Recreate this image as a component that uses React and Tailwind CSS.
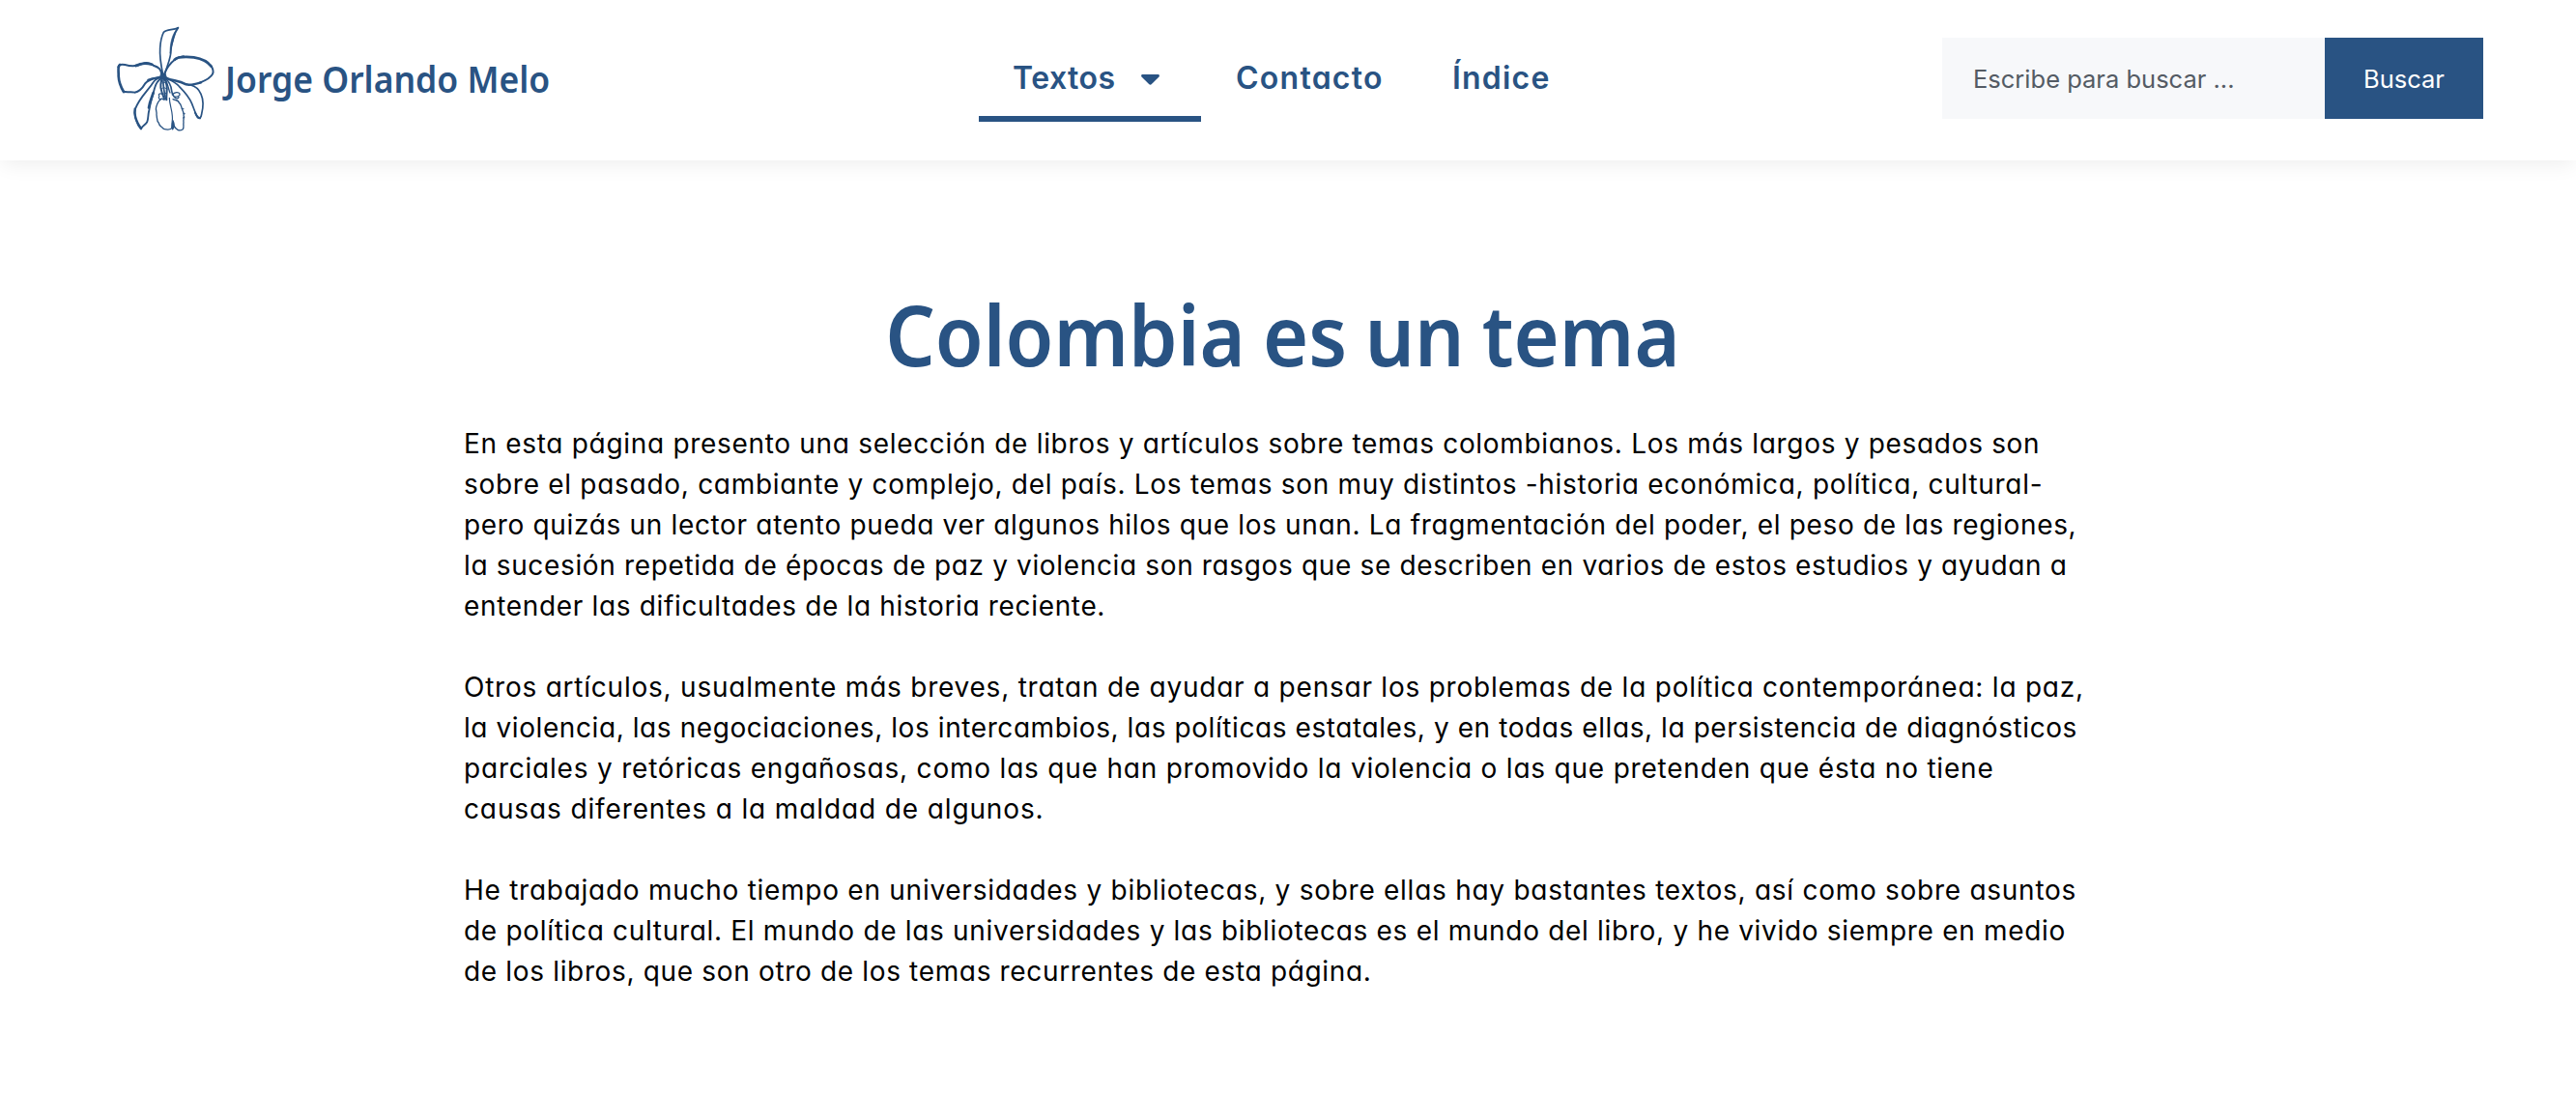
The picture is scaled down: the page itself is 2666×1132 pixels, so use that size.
const paragraphs = [
  [
    ['En esta página presento una selección de libros y artículos sobre temas colombianos. Los más largos y pesados son', 'tracking-[0.688px]'],
    ['sobre el pasado, cambiante y complejo, del país. Los temas son muy distintos -historia económica, política, cultural-', 'tracking-[0.71px]'],
    ['pero quizás un lector atento pueda ver algunos hilos que los unan. La fragmentación del poder, el peso de las regiones,', 'tracking-[0.664px]'],
    ['la sucesión repetida de épocas de paz y violencia son rasgos que se describen en varios de estos estudios y ayudan a', 'tracking-[0.647px]'],
    ['entender las dificultades de la historia reciente.', 'tracking-[0.66px]'],
  ],
  [
    ['Otros artículos, usualmente más breves, tratan de ayudar a pensar los problemas de la política contemporánea: la paz,', 'tracking-[0.77px]'],
    ['la violencia, las negociaciones, los intercambios, las políticas estatales, y en todas ellas, la persistencia de diagnósticos', 'tracking-[0.58px]'],
    ['parciales y retóricas engañosas, como las que han promovido la violencia o las que pretenden que ésta no tiene', 'tracking-[0.793px]'],
    ['causas diferentes a la maldad de algunos.', 'tracking-[0.876px]'],
  ],
  [
    ['He trabajado mucho tiempo en universidades y bibliotecas, y sobre ellas hay bastantes textos, así como sobre asuntos', 'tracking-[0.733px]'],
    ['de política cultural. El mundo de las universidades y las bibliotecas es el mundo del libro, y he vivido siempre en medio', 'tracking-[0.686px]'],
    ['de los libros, que son otro de los temas recurrentes de esta página.', 'tracking-[0.66px]'],
  ],
];

function Orchid() {
  return (
    <svg viewBox="0 0 390 390" className="h-[130px] w-[130px] shrink-0" fill="none" stroke="#295383" strokeLinecap="round" strokeLinejoin="round" aria-hidden="true">
      {/* top petal */}
      <path strokeWidth="5" d="M176 184 C171 160 165 128 167 102 C168 82 172 64 178 52 C188 42 208 46 223 38" />
      <path strokeWidth="5" d="M223 38 C216 48 211 60 209 70 C205 84 201 96 201 108 C201 132 190 152 181 184" />
      <path fill="#295383" strokeWidth="2" d="M222 38 C204 58 198 86 198 118 C202 96 208 80 210 66 C213 54 218 46 222 38 Z" />
      {/* right petal */}
      <path strokeWidth="6" d="M179 184 C188 162 198 148 212 138 C222 130 228 128 240 127" />
      <path strokeWidth="8" d="M212 137 C224 126 250 128 272 130 C296 134 316 144 326 158" />
      <path strokeWidth="6" d="M324 155 C332 166 334 174 330 182 C324 194 308 202 290 209" />
      <path strokeWidth="7.5" d="M294 208 C274 214 260 217 248 214 C238 209 226 205 212 202 C200 200 190 196 182 192" />
      {/* left petal */}
      <path strokeWidth="6" d="M173 186 C170 168 164 160 146 155 C138 149 124 145 112 150 C94 159 76 158 58 153 C48 151 38 152 37 160" />
      <path strokeWidth="8" d="M42 153 C34 160 39 174 38 188 C39 206 46 224 54 237" />
      <path strokeWidth="6" d="M53 236 C66 240 78 235 88 239 C104 236 112 226 120 212 C132 196 150 196 172 190" />
      <path strokeWidth="8" d="M92 156 C106 148 120 146 142 152" />
      <path strokeWidth="6.5" d="M130 200 C142 194 160 194 174 191" />
      {/* lower-left petal */}
      <path strokeWidth="5.5" d="M172 192 C154 194 148 204 140 216 C124 238 102 258 90 290 C85 308 92 326 100 342 L108 352" />
      <path strokeWidth="7" d="M89 290 C85 310 94 330 107 350" />
      <path strokeWidth="5.5" d="M108 352 C114 340 122 340 127 330 C131 318 129 310 133 294 C137 268 144 250 150 226 C154 210 162 200 173 194" />
      <path strokeWidth="8" d="M132 286 C135 266 140 258 146 240" />
      {/* lower-right petal */}
      <path strokeWidth="5" d="M184 194 C204 202 216 208 226 220 C244 238 258 254 266 274 C272 290 278 308 284 317 C290 322 294 318 296 306 C301 286 302 262 294 244 C288 230 280 220 262 216" />
      <path strokeWidth="6" d="M276 302 C280 312 284 318 291 319" />
      {/* column */}
      <path strokeWidth="6" d="M177 186 C170 202 165 220 172 236 C175 246 178 252 180 260" />
      <path strokeWidth="6" d="M178 190 C184 204 190 214 188 232 C188 244 186 252 187 262" />
      <path strokeWidth="5" d="M178 194 C174 212 180 236 184 258" />
      <path strokeWidth="5" d="M181 192 C194 204 202 218 203 234 C204 242 206 246 209 250" />
      <path strokeWidth="4" d="M184 198 C192 214 192 226 198 240" />
      <path strokeWidth="3" d="M174 210 C182 206 186 208 188 216 M171 228 C178 222 184 224 189 230 M176 244 L188 240" />
      <path fill="#295383" strokeWidth="3" d="M170 182 L184 182 L187 194 L178 198 L169 193 Z" />
      {/* lip */}
      <path strokeWidth="3.5" d="M174 244 C164 240 160 246 165 250 C160 256 164 262 172 258 C176 262 182 262 187 256" />
      <path strokeWidth="4" d="M205 246 C212 238 224 236 228 243 C230 250 220 253 210 252 C214 258 222 260 225 254" />
      <path strokeWidth="4" d="M170 260 C162 264 158 274 155 284 C152 294 158 300 156 308 C158 318 156 328 163 334 C164 344 174 346 178 352 C188 355 200 356 205 348" />
      <path strokeWidth="3.5" d="M196 256 C196 276 204 292 205 312 C207 328 200 340 207 348" />
      <path fill="#295383" strokeWidth="3.5" d="M207 326 C206 338 199 344 206 354 C211 348 213 338 207 326 Z" />
      <path strokeWidth="4" d="M207 260 C216 264 224 262 226 271 C234 276 231 284 236 290 C236 298 243 302 240 310 C243 318 238 324 240 332 C238 342 243 348 237 354 C226 360 216 354 211 344" />
      <path strokeWidth="3" d="M234 290 L240 290 M238 303 L244 305 M238 318 L243 316" />
    </svg>
  );
}

export default function App() {
  return (
    <div className="min-h-[1132px] overflow-hidden bg-white font-['Inter',sans-serif]">
      <header className="flex h-[166px] items-start bg-white shadow-[0_6px_20px_-2px_rgba(0,0,0,0.07)]">
        <a className="flex w-[903px] shrink-0 pt-4 pl-[110px] text-[#295383]">
          <Orchid />
          <span className="mt-[39px] -ml-[7px] inline-block origin-left scale-x-[0.935] text-[38px] leading-[52px] font-semibold whitespace-nowrap font-['Noto_Sans',sans-serif]">Jorge Orlando Melo</span>
        </a>

        <nav className="ml-[110px] flex shrink-0 pt-9 text-[32px] leading-[90px] font-semibold text-[#295383] [font-feature-settings:'cv11']">
          <a className="flex h-[90px] w-[230px] items-start border-b-6 border-[#295383] pl-[35px]">
            <span className="w-[133px] tracking-[0.5px]">Textos</span>
            <svg viewBox="0 0 19 11" className="mt-[41px] h-[11px] w-[19px]" fill="#295383" aria-hidden="true">
              <path d="M1.5 0h16c1.3 0 1.9 1.4 1 2.4l-7.6 7.7c-.8.8-2 .8-2.8 0L.5 2.4C-.4 1.4.2 0 1.5 0z" />
            </svg>
          </a>
          <a className="w-[224px] pl-[36px] tracking-[1.25px]">Contacto</a>
          <a className="w-[170px] pl-[36px] tracking-[1.2px]">Índice</a>
        </nav>

        <form className="mt-[39px] mr-[96px] ml-auto flex h-[84px] shrink-0 text-[25.5px] leading-[86px]">
          <label className="w-[396px] bg-[#f7f8fa] pl-[32px] text-[#545b64]">Escribe para buscar ...</label>
          <button type="button" className="w-[164px] bg-[#295383] text-white">Buscar</button>
        </form>
      </header>

      <main className="flex flex-col items-center">
        <h1 className="mt-[121px] -ml-[12px] scale-x-[0.94] text-[86px] leading-[118px] font-semibold whitespace-nowrap text-[#295383] [word-spacing:-3px] font-['Noto_Sans',sans-serif]">Colombia es un tema</h1>
        <article className="mt-[33px] flex w-[1706px] flex-col gap-[42px] text-[28px] leading-[42px] whitespace-nowrap text-black [font-feature-settings:'cv11']">
          {paragraphs.map((lines) => (
            <p key={lines[0][0]}>
              {lines.map(([text, tracking]) => (
                <span key={text} className={`block ${tracking}`}>{text}</span>
              ))}
            </p>
          ))}
        </article>
      </main>
    </div>
  );
}
